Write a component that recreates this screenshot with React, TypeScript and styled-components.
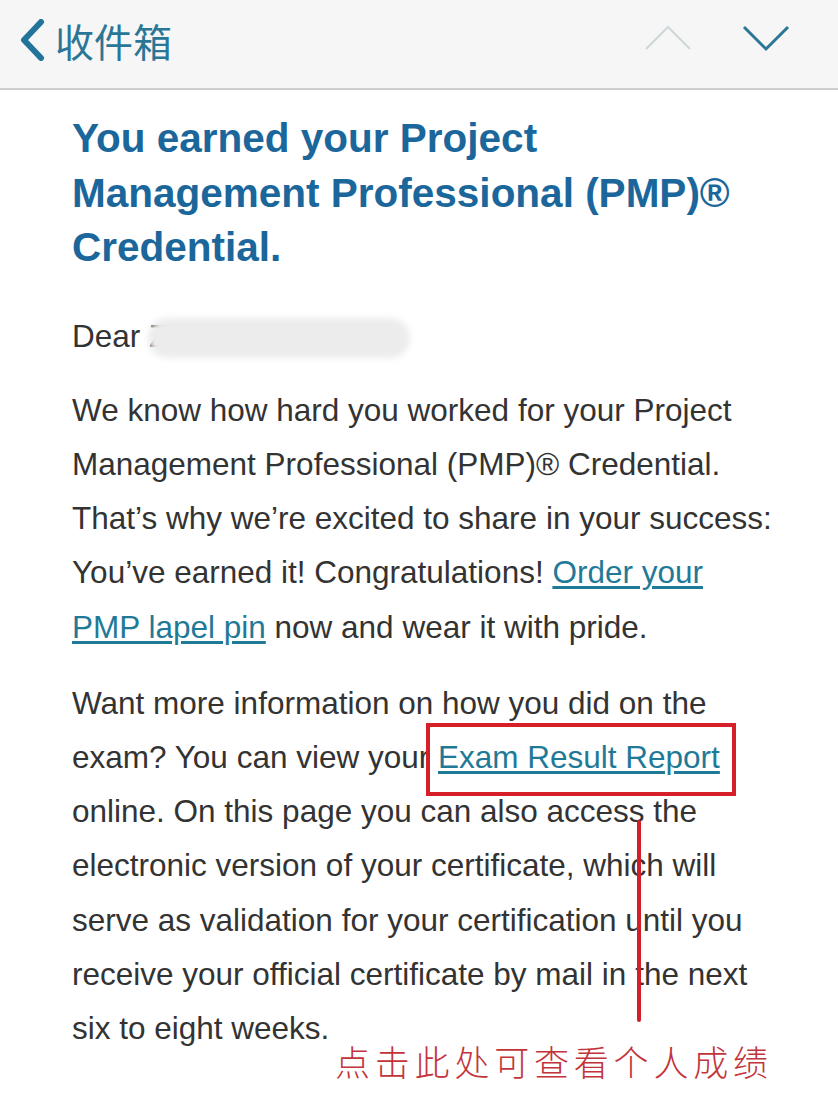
import React from "react";
import styled, { createGlobalStyle } from "styled-components";

const Global = createGlobalStyle`
  html, body { margin: 0; padding: 0; background: #ffffff; }
  body { font-family: "Liberation Sans", Arial, sans-serif; }
`;

const Page = styled.div`
  width: 838px;
  height: 1094px;
  overflow: hidden;
  background: #ffffff;
  position: relative;
`;

const NavBar = styled.header`
  height: 88px;
  background: #f6f6f6;
  border-bottom: 2px solid #cdcdcd;
  display: flex;
  align-items: center;
  padding: 0 48px 0 18px;
  box-sizing: content-box;
`;

const Back = styled.div`
  display: flex;
  align-items: center;
  gap: 9px;
  color: #2a7696;
  font-family: "Noto Sans CJK SC", sans-serif;
  font-size: 39px;
  margin-top: -8px;
`;

const Arrows = styled.div`
  margin-left: auto;
  display: flex;
  align-items: center;
  gap: 50px;
  margin-top: -12px;
`;

const Content = styled.main`
  padding: 0 0 0 72px;
`;

const Title = styled.h1`
  margin: 0;
  padding-top: 21px;
  font-size: 40.5px;
  line-height: 54.5px;
  font-weight: 700;
  color: #1b679b;
`;

const Para = styled.p<{ $gap: number }>`
  margin: ${(p) => p.$gap}px 0 0 0;
  font-size: 31.5px;
  line-height: 54.2px;
  color: #333333;
`;

const Blur = styled.span`
  display: inline-block;
  width: 262px;
  height: 40px;
  vertical-align: middle;
  margin-left: -20px;
  border-radius: 20px;
  background: #ececec;
  filter: blur(3px);
`;

const Link = styled.a`
  color: #1f7a98;
  text-decoration: underline;
  text-underline-offset: 3px;
`;

const Boxed = styled.span`
  position: relative;
`;

const RedBox = styled.span`
  position: absolute;
  left: -12px;
  right: -16px;
  top: -16px;
  bottom: -21px;
  border: 4px solid #d71f2a;
  pointer-events: none;
`;

const RedLine = styled.span`
  position: absolute;
  left: 637px;
  top: 820px;
  width: 4px;
  height: 202px;
  background: #d41f2a;
  border-radius: 2px;
`;

const Note = styled.div`
  margin: -14px 0 0 263px;
  font-family: "Noto Sans CJK SC", sans-serif;
  font-size: 35px;
  font-weight: 300;
  letter-spacing: 4.8px;
  color: #c2343a;
  line-height: 40px;
`;

const Chevron = ({ color, up }: { color: string; up?: boolean }) => (
  <svg width="48" height="28" viewBox="0 0 48 28">
    <polyline
      points={up ? "2,25 24,3 46,25" : "2,3 24,25 46,3"}
      fill="none"
      stroke={color}
      strokeWidth={up ? 2 : 3}
    />
  </svg>
);

export default function App() {
  return (
    <Page>
      <Global />
      <NavBar>
        <Back>
          <svg width="28" height="42" viewBox="0 0 28 42">
            <polyline points="23,3 6,21 23,39" fill="none" stroke="#23749a" strokeWidth="6" strokeLinecap="round" strokeLinejoin="round" />
          </svg>
          <span>收件箱</span>
        </Back>
        <Arrows>
          <Chevron color="#cfd6d9" up />
          <Chevron color="#2a7696" />
        </Arrows>
      </NavBar>
      <Content>
        <Title>
          You earned your Project
          <br />
          Management Professional (PMP)®
          <br />
          Credential.
        </Title>
        <Para $gap={34}>
          Dear Z<Blur />
        </Para>
        <Para $gap={20}>
          We know how hard you worked for your Project
          <br />
          Management Professional (PMP)® Credential.
          <br />
          That’s why we’re excited to share in your success:
          <br />
          You’ve earned it! Congratulations! <Link>Order your</Link>
          <br />
          <Link>PMP lapel pin</Link> now and wear it with pride.
        </Para>
        <Para $gap={22}>
          Want more information on how you did on the
          <br />
          exam? You can view your{" "}
          <Boxed>
            <Link>Exam Result Report</Link>
            <RedBox />
          </Boxed>
          <br />
          online. On this page you can also access the
          <br />
          electronic version of your certificate, which will
          <br />
          serve as validation for your certification until you
          <br />
          receive your official certificate by mail in the next
          <br />
          six to eight weeks.
        </Para>
        <RedLine />
        <Note>点击此处可查看个人成绩</Note>
      </Content>
    </Page>
  );
}
